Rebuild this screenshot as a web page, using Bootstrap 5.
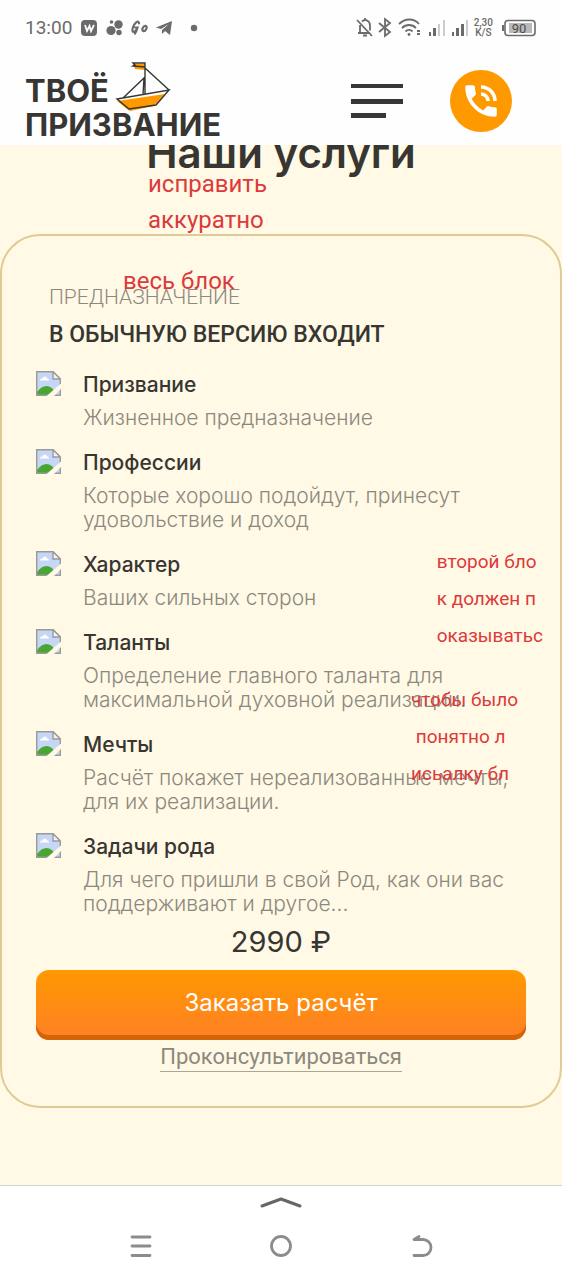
<!DOCTYPE html>
<html lang="ru">
<head>
<meta charset="utf-8">
<meta name="viewport" content="width=device-width, initial-scale=1">
<title>Твоё призвание</title>
<link href="https://cdn.jsdelivr.net/npm/bootstrap@5.3.0/dist/css/bootstrap.min.css" rel="stylesheet">
<style>
  :root { --ink: #373632; --muted: #8b897f; --cream: #fff9e5; --line: #e0cb94; --brand: #ff9900; }
  body { background: #fff; color: var(--ink); font-family: Inter, "Liberation Sans", sans-serif; }
  .site-top { z-index: 2; background: #fefefe; }
  .status-bar { height: 56px; padding: 0 25px; color: #6b6b6b; font: 400 19px/56px Roboto, sans-serif; }
  .net-speed { font: 500 10px/10px Roboto, sans-serif; text-align: center; }
  .site-head { height: 89px; padding: 0 50px 0 25px; }
  .logo { color: var(--ink); font-size: 31px; font-weight: 700; line-height: 34px; width: 200px; padding-top: 18px; }
  .logo-boat { left: 90px; top: 5px; }
  .menu-btn { margin-right: 47px; }
  .call-btn { width: 62px; height: 62px; margin-top: 14px; background: var(--brand); }
  main { background: var(--cream); }
  .page-title { font-size: 42px; font-weight: 600; line-height: 52px; margin: -18px 0 55px; }
  .service-card { border: 2px solid var(--line); border-radius: 40px; background: var(--cream); padding: 47px 34px 34px; margin-bottom: 77px; }
  .kicker { font: 300 21px/28px Roboto, sans-serif; color: var(--muted); padding-left: 13px; margin: 0; }
  .card-head { font: 500 23px/32px Roboto, sans-serif; padding-left: 13px; margin: 8px 0 20px; }
  .perk { gap: 22px; margin-bottom: 19px; }
  .perk h3 { font-size: 21px; font-weight: 500; line-height: 28px; margin: 0 0 7px; }
  .perk p { font-size: 21px; font-weight: 300; line-height: 24px; margin: 0; color: var(--muted); }
  .perk:last-child { margin-bottom: 8px; }
  .price { font-size: 29px; line-height: 36px; margin: 0 0 10px; }
  .order-btn { height: 70px; border: 0; border-radius: 13px; color: #fff; font-size: 24px; line-height: 30px; padding: 0 0 4px;
    background: linear-gradient(#ff9900, #ff7f27); box-shadow: inset 0 -5px 0 #d36508; }
  .consult { font: 400 22px/28px Roboto, sans-serif; color: var(--muted); text-decoration: none; border-bottom: 1px solid #a8a698; margin-top: 3px; }
  .note { color: #dd3a3c; font-family: Roboto, sans-serif; white-space: nowrap; }
  .note-lg { font-size: 24px; line-height: 36px; }
  .note-sm { font-size: 19px; line-height: 37px; }
  .note-a { left: 148px; top: 21px; }
  .note-b { left: 123px; top: 118px; }
  .note-c { right: 19px; top: 398px; }
  .note-d { right: 44px; top: 536px; }
  .sys-nav { border-top: 1px solid #d6d5c5; height: 95px; }
  .sys-nav button { line-height: 0; }
</style>
</head>
<body class="d-flex flex-column min-vh-100">

<svg class="d-none">
  <symbol id="broken" viewBox="0 0 25 25">
    <path d="M.7.7H17L24.3 8v16.3H.7z" fill="#c5d7f5"/>
    <path d="M4 9.500c0-2 2-2 2.500-2 .5-2.500 4-2.500 4.500 0 2 0 2 2 2 2z" fill="#fff"/>
    <path d="M1 24v-3c5-7 11-8 16-3l1 6z" fill="#4aa633"/>
    <path d="M.7 24.300V.7H17L24.300 8v16.300z" fill="none" stroke="#9a9a9a" stroke-width="1.400"/>
    <path d="M17 .7V8h7.300z" fill="#f3f3f3" stroke="#9a9a9a" stroke-width="1.400"/>
    <path d="M10 25.500 25.500 12v5.500l-8 8z" fill="#fff9e5"/>
  </symbol>
</svg>

<header class="site-top position-relative">
  <div class="status-bar d-flex align-items-center justify-content-between">
    <div class="d-flex align-items-center">
      <span>13:00</span>
      <svg class="ms-2" width="122" height="20" viewBox="0 0 122 20" fill="#6b6b6b">
        <rect x="1" y="2" width="16" height="16" rx="4"/>
        <path d="M5 7l2 6 2.500-5 1.500 5 3-6" fill="none" stroke="#fff" stroke-width="1.800"/>
        <circle cx="31" cy="12.500" r="4.600"/><circle cx="38.500" cy="6.500" r="4.200"/><circle cx="31.500" cy="4" r="1.800"/><circle cx="39" cy="14.500" r="2.700"/>
        <path d="M59 5.500c0-3-3-2-5 1.500s-2 7-.5 7 3-2 4-4.500h-2.500M57.500 9.500c-.5 2-1 4-2.500 6M66 8c-2.500-1-5 4-2.800 5s4.800-4 2.800-5" fill="none" stroke="#6b6b6b" stroke-width="2.200" stroke-linecap="round"/>
        <path d="M76 9.500 92 3l-2 14-5-4-3 3v-4l7-6-8 5z"/>
        <circle cx="114" cy="10" r="3.200"/>
      </svg>
    </div>
    <div class="d-flex align-items-center">
      <svg width="114" height="22" viewBox="0 0 114 22" fill="none" stroke="#6b6b6b" stroke-width="1.800">
        <path d="M4 16V8M6 4.500c3-3 8-1 8 4v5M2 16h12M1 3l15 16M9 3V1M7 18.500h4"/>
        <path d="m23 6 11 9-5 4V2l5 4-11 9"/>
        <path d="M43 7c6-6 15-6 20 0M46 11c4-4 10-4 14 0M49.500 14.500c2-2 5-2 7 0"/>
        <circle cx="53" cy="17.500" r="1.400" fill="#6b6b6b" stroke="none"/>
        <g stroke="none" fill="#6b6b6b"><path d="M61 13h3v2h-3zM61 16h3v2h-3zM73 15h2v4h-2zM77 11h3v8h-3zM96 15h2v4h-2zM100 11h3v8h-3zM105 7h3v12h-3z"/><path d="M82 7h2v12h-2zM87 3h2v16h-2zM110 3h2v16h-2z" fill="#ccc"/></g>
      </svg>
      <div class="net-speed ms-1 me-2">2,30<br>K/S</div>
      <svg width="36" height="18" viewBox="0 0 36 18">
        <path d="M2 6v6" stroke="#6b6b6b" stroke-width="2"/>
        <rect x="4" y="1.500" width="30" height="15" rx="3" fill="none" stroke="#6b6b6b" stroke-width="1.600"/>
        <rect x="8" y="4" width="23" height="10" fill="#b9b9b9"/>
        <text x="18" y="14" text-anchor="middle" font-family="Roboto, sans-serif" font-size="13" fill="#4d4d4d">90</text>
      </svg>
    </div>
  </div>

  <div class="site-head d-flex align-items-start">
    <a href="#" class="logo position-relative text-decoration-none me-auto">ТВОЁ<br>ПРИЗВАНИЕ
      <svg class="logo-boat position-absolute" width="56" height="50" viewBox="0 0 56 50">
        <path d="m2 40 48-7-11 12-24 5-3-2z" fill="#ff9900"/>
        <path d="M18 3h12v6l-10-1z" fill="#ff9900"/>
        <path d="M2 38 54 29 41 44 14 48zM30 33V3M28 34l1-17L8 37M30 7l24 22M18 2h12v4l-12-1 2-1z" fill="none" stroke="#373632" stroke-width="1.400"/>
      </svg>
    </a>
    <button type="button" class="menu-btn btn p-0 border-0 mt-4" aria-label="Меню">
      <svg class="d-block" width="52" height="42" viewBox="0 0 52 42" fill="#373639"><path d="M0 4h52v4H0zM0 19h52v5H0zM0 33h35v5H0z"/></svg>
    </button>
    <button type="button" class="call-btn btn p-0 border-0 rounded-circle d-flex align-items-center justify-content-center" aria-label="Позвонить">
      <svg width="42" height="42" viewBox="0 0 24 24" fill="#fff"><path d="M20 15.500c-1.250 0-2.450-.2-3.570-.57a1.020 1.020 0 0 0-1.020.24l-2.200 2.200a15.050 15.050 0 0 1-6.590-6.590l2.200-2.210a.96.960 0 0 0 .25-1A11.360 11.360 0 0 1 8.500 4c0-.55-.45-1-1-1H4c-.55 0-1 .45-1 1 0 9.390 7.610 17 17 17 .55 0 1-.45 1-1v-3.500c0-.55-.45-1-1-1zM19 12h2a9 9 0 0 0-9-9v2c3.870 0 7 3.130 7 7zm-4 0h2c0-2.760-2.240-5-5-5v2c1.660 0 3 1.340 3 3z"/></svg>
    </button>
  </div>
</header>

<main class="position-relative flex-grow-1">
  <h1 class="page-title text-center">Наши услуги</h1>

  <section class="service-card">
    <p class="kicker">ПРЕДНАЗНАЧЕНИЕ</p>
    <h2 class="card-head">В ОБЫЧНУЮ ВЕРСИЮ ВХОДИТ</h2>
    <ul class="list-unstyled m-0">
      <li class="perk d-flex"><svg class="flex-shrink-0" width="25" height="25"><use href="#broken"/></svg>
        <div><h3>Призвание</h3><p>Жизненное предназначение</p></div></li>
      <li class="perk d-flex"><svg class="flex-shrink-0" width="25" height="25"><use href="#broken"/></svg>
        <div><h3>Профессии</h3><p>Которые хорошо подойдут, принесут удовольствие и доход</p></div></li>
      <li class="perk d-flex"><svg class="flex-shrink-0" width="25" height="25"><use href="#broken"/></svg>
        <div><h3>Характер</h3><p>Ваших сильных сторон</p></div></li>
      <li class="perk d-flex"><svg class="flex-shrink-0" width="25" height="25"><use href="#broken"/></svg>
        <div><h3>Таланты</h3><p>Определение главного таланта для максимальной духовной реализации.</p></div></li>
      <li class="perk d-flex"><svg class="flex-shrink-0" width="25" height="25"><use href="#broken"/></svg>
        <div><h3>Мечты</h3><p>Расчёт покажет нереализованные мечты, для их реализации.</p></div></li>
      <li class="perk d-flex"><svg class="flex-shrink-0" width="25" height="25"><use href="#broken"/></svg>
        <div><h3>Задачи рода</h3><p>Для чего пришли в свой Род, как они вас поддерживают и другое...</p></div></li>
    </ul>
    <p class="price text-center">2990 ₽</p>
    <button type="button" class="order-btn btn w-100">Заказать расчёт</button>
    <div class="d-flex justify-content-center"><a href="#" class="consult">Проконсультироваться</a></div>
  </section>

  <div class="note note-lg note-a position-absolute">исправить<br>аккуратно</div>
  <div class="note note-lg note-b position-absolute">весь блок</div>
  <div class="note note-sm note-c position-absolute">второй бло<br>к должен п<br>оказыватьс</div>
  <div class="note note-sm note-d position-absolute">чтобы было<br>&nbsp;понятно л<br>исьалку бл</div>
</main>

<nav class="sys-nav d-flex flex-column align-items-center" aria-label="Системная навигация">
  <svg class="mt-2" width="42" height="16" viewBox="0 0 42 16"><path d="M2 12 21 5l19 7" fill="none" stroke="#666" stroke-width="3" stroke-linecap="round" stroke-linejoin="round"/></svg>
  <div class="d-flex justify-content-center w-100 mt-4">
    <button type="button" class="btn p-0 border-0 w-25" aria-label="Недавние"><svg width="24" height="24" viewBox="0 0 24 24" stroke="#8c8c8c" stroke-width="2.800" stroke-linecap="round"><path d="M3 3h18M3 12h18M3 21.500h18"/></svg></button>
    <button type="button" class="btn p-0 border-0 w-25" aria-label="Домой"><svg width="24" height="24" viewBox="0 0 24 24"><circle cx="12" cy="12" r="9.500" fill="none" stroke="#8c8c8c" stroke-width="2.800"/></svg></button>
    <button type="button" class="btn p-0 border-0 w-25" aria-label="Назад"><svg width="24" height="24" viewBox="0 0 24 24" fill="none" stroke="#8c8c8c" stroke-width="2.800" stroke-linecap="round" stroke-linejoin="round"><path d="m9 2.500-5 3h9a8 8 0 0 1 0 16H4"/></svg></button>
  </div>
</nav>

<script src="https://cdn.jsdelivr.net/npm/bootstrap@5.3.0/dist/js/bootstrap.bundle.min.js"></script>
</body>
</html>
